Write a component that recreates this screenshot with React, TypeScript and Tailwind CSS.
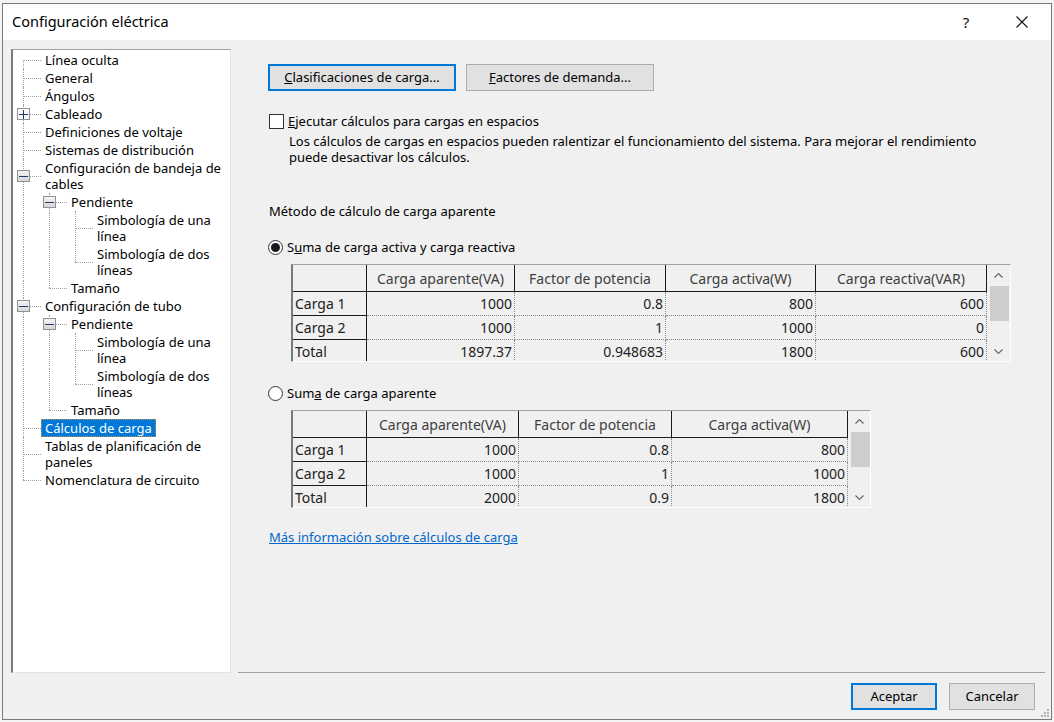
import clsx from 'clsx'

type TreeRow = {
  lines: string[]
  depth: number
  guides: boolean[]
  own: 'first' | 'mid' | 'last'
  box?: '+' | '-'
  selected?: boolean
}

const tree: TreeRow[] = [
  { lines: ['Línea oculta'], depth: 0, guides: [], own: 'first' },
  { lines: ['General'], depth: 0, guides: [], own: 'mid' },
  { lines: ['Ángulos'], depth: 0, guides: [], own: 'mid' },
  { lines: ['Cableado'], depth: 0, guides: [], own: 'mid', box: '+' },
  { lines: ['Definiciones de voltaje'], depth: 0, guides: [], own: 'mid' },
  { lines: ['Sistemas de distribución'], depth: 0, guides: [], own: 'mid' },
  { lines: ['Configuración de bandeja de', 'cables'], depth: 0, guides: [], own: 'mid', box: '-' },
  { lines: ['Pendiente'], depth: 1, guides: [true], own: 'mid', box: '-' },
  { lines: ['Simbología de una', 'línea'], depth: 2, guides: [true, true], own: 'mid' },
  { lines: ['Simbología de dos', 'líneas'], depth: 2, guides: [true, true], own: 'last' },
  { lines: ['Tamaño'], depth: 1, guides: [true], own: 'last' },
  { lines: ['Configuración de tubo'], depth: 0, guides: [], own: 'mid', box: '-' },
  { lines: ['Pendiente'], depth: 1, guides: [true], own: 'mid', box: '-' },
  { lines: ['Simbología de una', 'línea'], depth: 2, guides: [true, true], own: 'mid' },
  { lines: ['Simbología de dos', 'líneas'], depth: 2, guides: [true, true], own: 'last' },
  { lines: ['Tamaño'], depth: 1, guides: [true], own: 'last' },
  { lines: ['Cálculos de carga'], depth: 0, guides: [], own: 'mid', selected: true },
  { lines: ['Tablas de planificación de', 'paneles'], depth: 0, guides: [], own: 'mid' },
  { lines: ['Nomenclatura de circuito'], depth: 0, guides: [], own: 'last' },
]

const dots = 'border-dotted border-[#a0a0a0]'

function ExpandBox({ kind }: { kind: '+' | '-' }) {
  return (
    <div
      className={clsx(
        'absolute left-[4px] top-1/2 -mt-[6px] flex h-[12px] w-[13px] items-center justify-center border border-[#919191]',
        kind === '-' ? 'bg-gradient-to-b from-[#f4f4f4] to-[#d6d6d6]' : 'bg-[#fbfbfb]',
      )}
    >
      <div className="absolute h-px w-[9px] bg-[#1e3867]" />
      {kind === '+' && <div className="absolute h-[9px] w-px bg-[#1e3867]" />}
    </div>
  )
}

function Tree() {
  return (
    <div className="h-full w-[220px] shrink-0 border-b border-l-2 border-r border-t border-b-[#e3e3e3] border-l-[#7a7a7a] border-r-[#e3e3e3] border-t-[#a0a0a0] bg-white pt-px">
      {tree.map((r, i) => (
        <div key={i} className="flex py-px">
          {r.guides.map((g, j) => (
            <div key={j} className="relative w-[26px] shrink-0">
              {g && <div className={clsx('absolute bottom-0 left-[10px] top-0 border-l', dots)} />}
            </div>
          ))}
          <div className="relative w-[32px] shrink-0">
            <div
              className={clsx(
                'absolute left-[10px] border-l',
                dots,
                r.own === 'first' && '-bottom-px top-1/2',
                r.own === 'mid' && '-bottom-px -top-px',
                r.own === 'last' && '-top-px bottom-1/2',
              )}
            />
            <div className={clsx('absolute left-[10px] top-1/2 w-[18px] border-t', dots)} />
            {r.box && <ExpandBox kind={r.box} />}
          </div>
          <div
            className={clsx(
              'leading-[16px]',
              r.selected && '-my-px -ml-[4px] border border-dotted border-[#c9924a] bg-[#0078d7] px-[3px] py-0 text-white',
            )}
          >
            {r.lines.map((l) => (
              <div key={l}>{l}</div>
            ))}
          </div>
        </div>
      ))}
    </div>
  )
}

function Chevron({ up }: { up?: boolean }) {
  return (
    <svg width="9" height="5" viewBox="0 0 9 5" fill="none" stroke="#606060" strokeWidth="1.1">
      <polyline points={up ? '0.5,4.5 4.5,0.6 8.5,4.5' : '0.5,0.5 4.5,4.4 8.5,0.5'} />
    </svg>
  )
}

type Grid = {
  widths: string[]
  headers: string[]
  rows: string[][]
  outer: string
}

function DataGrid({ widths, headers, rows, outer }: Grid) {
  return (
    <div
      className={clsx(
        'ml-[23px] flex h-[98px] overflow-hidden border-b border-l-2 border-r border-t border-b-white border-l-[#7a7a7a] border-r-white border-t-[#a0a0a0] text-[14px]',
        outer,
      )}
    >
      <div className="flex flex-col">
        <div className="flex h-[27px] shrink-0">
          <div className={clsx(widths[0], 'border-b border-r border-[#1a1a1a]')} />
          {headers.map((h, i) => (
            <div
              key={h}
              className={clsx(
                widths[i + 1],
                'flex items-center justify-center border-b border-r border-[#1a1a1a] text-[#3e3e3e]',
              )}
            >
              {h}
            </div>
          ))}
        </div>
        {rows.map((row) => (
          <div key={row[0]} className="flex h-[24px] shrink-0">
            {row.map((c, i) =>
              i === 0 ? (
                <div key={i} className={clsx(widths[0], 'flex items-center border-b border-r border-[#1a1a1a] pl-[2px] text-[#222]')}>
                  {c}
                </div>
              ) : (
                <div
                  key={i}
                  className={clsx(
                    widths[i],
                    'flex items-center justify-end border-b border-r border-dotted border-[#8a8a8a] pr-[2px] text-[#222]',
                  )}
                >
                  {c}
                </div>
              ),
            )}
          </div>
        ))}
      </div>
      <div className="flex w-[23px] shrink-0 flex-col">
        <div className="flex h-[20px] items-center justify-center">
          <Chevron up />
        </div>
        <div className="flex-1 pl-[3px] pr-px pt-px">
          <div className="h-[35px] bg-[#cdcdcd]" />
        </div>
        <div className="flex h-[20px] items-center justify-center">
          <Chevron />
        </div>
      </div>
    </div>
  )
}

function Radio({ on }: { on?: boolean }) {
  return (
    <div className="flex h-[15px] w-[15px] items-center justify-center rounded-full border border-[#333] bg-white">
      {on && <div className="h-[9px] w-[9px] rounded-full bg-[#1a1a1a]" />}
    </div>
  )
}

function Button({ children, focus, w }: { children: React.ReactNode; focus?: boolean; w: string }) {
  return (
    <div
      className={clsx(
        'flex h-[27px] items-center justify-center bg-[#e1e1e1]',
        w,
        focus ? 'border-2 border-[#0078d7]' : 'border border-[#adadad]',
      )}
    >
      {children}
    </div>
  )
}

export default function App() {
  return (
    <div className="h-[722px] w-[1054px] overflow-hidden bg-[#f4f4f4] pl-[2px] pt-[3px] font-['Noto_Sans',sans-serif] text-[13px] text-black">
      <div className="relative flex h-[717px] w-[1050px] flex-col border border-[#7a7a7a] bg-[#f0f0f0]">
        {/* title bar */}
        <div className="flex h-[36px] shrink-0 items-center bg-white">
          <div className="flex-1 pl-[9px] text-[14.5px]">Configuración eléctrica</div>
          <div className="flex w-[46px] justify-center text-[15px] text-[#111]">?</div>
          <div className="ml-[10px] mr-[6px] flex w-[46px] justify-center">
            <svg width="12" height="12" viewBox="0 0 12 12" stroke="#111" strokeWidth="1.1">
              <path d="M0.5 0.5 11.5 11.5M11.5 0.5 0.5 11.5" />
            </svg>
          </div>
        </div>

        {/* body */}
        <div className="flex h-[633px] shrink-0 pl-[8px] pr-[6px] pt-[9px]">
          <Tree />
          <div className="ml-[7px] flex flex-1 flex-col border-b border-[#a0a0a0] pl-[30px]">
            <div className="mt-[15px] flex gap-[10px]">
              <Button focus w="w-[188px]">
                <span>
                  <u>C</u>lasificaciones de carga...
                </span>
              </Button>
              <Button w="w-[188px]">
                <span>
                  <u>F</u>actores de demanda...
                </span>
              </Button>
            </div>

            <div className="mt-[22px] flex h-[16px] items-center pl-px">
              <div className="h-[15px] w-[15px] border border-[#333] bg-white" />
              <div className="ml-[4px] leading-[16px]">
                <u>E</u>jecutar cálculos para cargas en espacios
              </div>
            </div>
            <div className="ml-[21px] mt-[4px] leading-[16px]">
              <div>
                Los cálculos de cargas en espacios pueden ralentizar el funcionamiento del sistema. Para mejorar el rendimiento
              </div>
              <div>puede desactivar los cálculos.</div>
            </div>

            <div className="mt-[38px] pl-px leading-[16px]">Método de cálculo de carga aparente</div>

            <div className="mt-[20px] flex h-[16px] items-center">
              <Radio on />
              <div className="ml-[4px] leading-[16px]">
                S<u>u</u>ma de carga activa y carga reactiva
              </div>
            </div>
            <div className="mt-[9px]">
              <DataGrid
                outer="w-[720px]"
                widths={['w-[74px]', 'w-[148px]', 'w-[151px]', 'w-[150px]', 'w-[171px]']}
                headers={['Carga aparente(VA)', 'Factor de potencia', 'Carga activa(W)', 'Carga reactiva(VAR)']}
                rows={[
                  ['Carga 1', '1000', '0.8', '800', '600'],
                  ['Carga 2', '1000', '1', '1000', '0'],
                  ['Total', '1897.37', '0.948683', '1800', '600'],
                ]}
              />
            </div>

            <div className="mt-[23px] flex h-[16px] items-center">
              <Radio />
              <div className="ml-[4px] leading-[16px]">
                Sum<u>a</u> de carga aparente
              </div>
            </div>
            <div className="mt-[9px]">
              <DataGrid
                outer="w-[580px]"
                widths={['w-[74px]', 'w-[152px]', 'w-[153px]', 'w-[176px]']}
                headers={['Carga aparente(VA)', 'Factor de potencia', 'Carga activa(W)']}
                rows={[
                  ['Carga 1', '1000', '0.8', '800'],
                  ['Carga 2', '1000', '1', '1000'],
                  ['Total', '2000', '0.9', '1800'],
                ]}
              />
            </div>

            <div className="mt-[21px] pl-px leading-[16px] text-[#0066cc] underline">
              Más información sobre cálculos de carga
            </div>
          </div>
        </div>

        {/* footer */}
        <div className="flex justify-end gap-[12px] pr-[16px] pt-[10px]">
          <Button focus w="w-[86px]">
            Aceptar
          </Button>
          <Button w="w-[86px]">Cancelar</Button>
        </div>

        {/* size grip */}
        <div className="absolute bottom-[2px] right-[2px] grid grid-cols-3 gap-px">
          <div />
          <div />
          <div className="h-[2px] w-[2px] bg-[#b5b5b5]" />
          <div />
          <div className="h-[2px] w-[2px] bg-[#b5b5b5]" />
          <div className="h-[2px] w-[2px] bg-[#b5b5b5]" />
          <div className="h-[2px] w-[2px] bg-[#b5b5b5]" />
          <div className="h-[2px] w-[2px] bg-[#b5b5b5]" />
          <div className="h-[2px] w-[2px] bg-[#b5b5b5]" />
        </div>
      </div>
    </div>
  )
}
